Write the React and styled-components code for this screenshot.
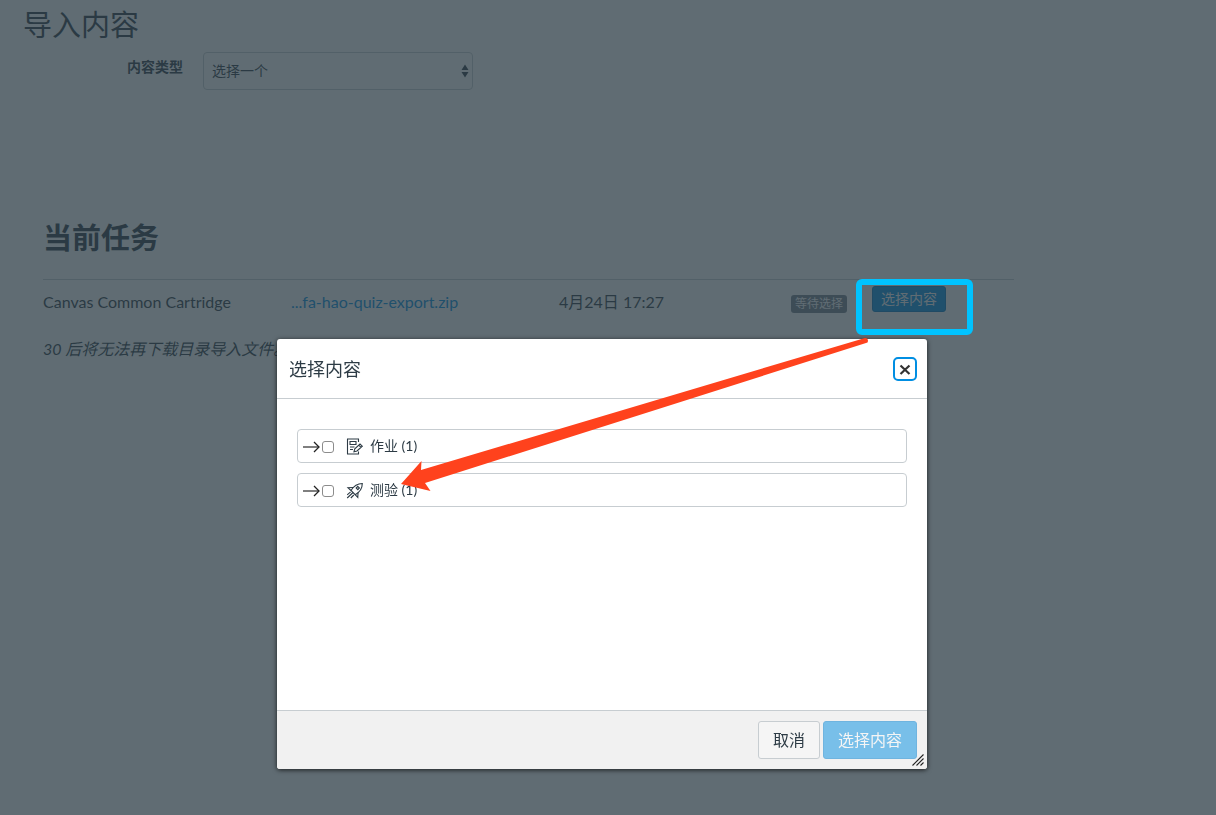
import React from "react";
import styled, { createGlobalStyle } from "styled-components";

const Global = createGlobalStyle`
  *, *::before, *::after { box-sizing: border-box; }
  html, body, #root { height: 100%; }
  body {
    margin: 0;
    background: #fff;
    color: #2d3b45;
    font-family: Lato, "Noto Sans CJK SC", sans-serif;
    font-size: 16px;
    line-height: 24px;
  }
  button, input, select { font: inherit; color: inherit; }
`;

const Page = styled.main`
  min-height: 100%;
  padding: 5px 23px;
`;

const PageTitle = styled.h1`
  margin: 0;
  font-size: 29px;
  line-height: 40px;
  font-weight: 400;
`;

const Field = styled.div`
  display: flex;
  align-items: flex-start;
  gap: 20px;
  padding-top: 7px;
  font-size: 14px;
`;

const FieldLabel = styled.label`
  width: 160px;
  padding-top: 5px;
  line-height: 20px;
  font-weight: 700;
  text-align: right;
`;

const SelectWrap = styled.div`
  display: grid;
  align-items: center;
  width: 270px;
  > * { grid-area: 1 / 1; }
  > svg { justify-self: end; margin-right: 4px; pointer-events: none; }
`;

const Select = styled.select`
  appearance: none;
  width: 100%;
  height: 38px;
  padding: 0 8px;
  border: 1px solid #c7cdd1;
  border-radius: 4px;
  background: #fff;
`;

const Jobs = styled.section`
  max-width: 971px;
  margin: 128px 0 0 20px;
`;

const JobsTitle = styled.h2`
  margin: 0;
  padding-bottom: 21px;
  border-bottom: 1px solid #c7cdd1;
  font-size: 29px;
  line-height: 40px;
  font-weight: 700;
`;

const JobTable = styled.table`
  width: 100%;
  border-collapse: collapse;
  table-layout: fixed;
  td { padding: 6px 0; height: 46px; vertical-align: top; }
`;

const Cell = styled.td`
  width: ${(p) => p.$width}px;
  line-height: ${(p) => p.$line || 32}px;
`;

const FileLink = styled.a`
  color: #008ee2;
  text-decoration: none;
`;

const Badge = styled.span`
  display: inline-block;
  padding: 0 4px;
  border-radius: 3px;
  background: #73818c;
  color: #fff;
  font-size: 12px;
  line-height: 18px;
`;

const SmallButton = styled.button`
  display: block;
  height: 26px;
  padding: 0 8px;
  border: 1px solid #0079c1;
  border-radius: 3px;
  background: #008ee2;
  color: #fff;
  font-size: 14px;
  line-height: 24px;
`;

const Note = styled.p`
  margin: 0;
  padding-top: 11px;
  font-style: italic;
`;

const Overlay = styled.div`
  position: fixed;
  inset: 0;
  background: rgba(43, 59, 68, 0.75);
`;

const Dialog = styled.section`
  position: absolute;
  top: 339px;
  left: calc(50% - 331px);
  display: flex;
  flex-direction: column;
  width: 650px;
  height: 430px;
  border-radius: 3px;
  overflow: hidden;
  background: #fff;
  box-shadow: 0 1px 5px rgba(0, 0, 0, 0.75);
`;

const DialogHeader = styled.header`
  display: flex;
  align-items: center;
  justify-content: space-between;
  height: 60px;
  padding: 0 10px 0 12px;
  border-bottom: 1px solid #c7cdd1;
`;

const DialogTitle = styled.h2`
  margin: 0;
  font-size: 18px;
  font-weight: 400;
`;

const CloseButton = styled.button`
  display: grid;
  place-items: center;
  width: 24px;
  height: 24px;
  padding: 0;
  border: 2px solid #008ee2;
  border-radius: 5px;
  background: #fff;
  color: #333;
`;

const DialogBody = styled.div`
  flex: 1;
  padding: 30px 20px;
`;

const List = styled.ul`
  display: flex;
  flex-direction: column;
  gap: 10px;
  margin: 0;
  padding: 0;
  list-style: none;
`;

const Item = styled.li`
  display: flex;
  align-items: center;
  height: 34px;
  padding-left: 5px;
  border: 1px solid #c7cdd1;
  border-radius: 4px;
  font-size: 14px;
`;

const Expand = styled.button`
  display: flex;
  margin-right: 2px;
  padding: 0;
  border: 0;
  background: none;
`;

const Check = styled.input`
  appearance: none;
  width: 12px;
  height: 12px;
  margin: 1px 0 0;
  border: 1px solid #8c8c8c;
  border-radius: 3px;
  background: #fff;
`;

const ItemLabel = styled.label`
  display: flex;
  align-items: center;
  gap: 6px;
  padding-left: 12px;
`;

const DialogFooter = styled.footer`
  display: flex;
  justify-content: flex-end;
  gap: 3px;
  height: 59px;
  padding: 10px;
  border-top: 1px solid #c7cdd1;
  background: #f1f1f1;
`;

const FooterButton = styled.button`
  height: 38px;
  padding: 0 14px;
  border: 1px solid ${(p) => (p.$primary ? "#6fb4df" : "#c7cdd1")};
  border-radius: 3px;
  background: ${(p) => (p.$primary ? "#78bfe9" : "#f5f5f5")};
  color: ${(p) => (p.$primary ? "#f5f5f5" : "#2d3b45")};
`;

const Grip = styled.svg`
  position: absolute;
  right: 3px;
  bottom: 3px;
`;

const Marks = styled.svg`
  position: absolute;
  top: 275px;
  left: calc(50% - 213px);
  pointer-events: none;
`;

const ArrowRight = () => (
  <svg width="17" height="14" viewBox="0 0 17 14" fill="none" strokeWidth="1.3">
    <path stroke="#555" d="M0 8H15.5" />
    <path stroke="#222" d="M11 3L16 8L11 13" />
  </svg>
);

const AssignmentIcon = () => (
  <svg width="18" height="18" viewBox="0 0 18 18" fill="none" stroke="#2d3b45" strokeWidth="1.1">
    <path d="M12.5 5V2H1.5V17H12.5V14.5" />
    <path d="M4 4.5H10V7.5H4ZM4 10H8.5M4 12.5H7" />
    <path d="M8 14.7L8.8 11.8L14 7L16.3 9.2L11 14ZM12.7 8.2L15 10.4" />
  </svg>
);

const QuizIcon = () => (
  <svg width="18" height="18" viewBox="0 0 18 18" fill="none" stroke="#2d3b45" strokeWidth="1.1">
    <path d="M5 9.5C8 4.6 11.5 2.5 16.3 2.5C16.3 7.3 14 11 9.2 13.7Z" />
    <path d="M7.3 6.5L2 6.8L5 9.5M12 11.5L11.8 16.5L9.2 13.7" />
    <path d="M11.8 5.4L13.4 7L11.8 8.6L10.2 7ZM1.2 17L7 11.5M1.2 13.8L4.6 10.8M4.8 17L7.8 14" />
  </svg>
);

const items = [
  { id: "assignments", label: "作业 (1)", Icon: AssignmentIcon },
  { id: "quizzes", label: "测验 (1)", Icon: QuizIcon },
];

export default function App() {
  return (
    <>
      <Global />
      <Page>
        <PageTitle>导入内容</PageTitle>
        <Field>
          <FieldLabel htmlFor="content-type">内容类型</FieldLabel>
          <SelectWrap>
            <Select id="content-type" defaultValue="none">
              <option value="none">选择一个</option>
            </Select>
            <svg width="8" height="14" viewBox="0 0 8 14" fill="#2d3b45">
              <path d="M4 0.5L7.5 6H0.5ZM4 13.5L7.5 8H0.5Z" />
            </svg>
          </SelectWrap>
        </Field>
        <Jobs>
          <JobsTitle>当前任务</JobsTitle>
          <JobTable>
            <tbody>
              <tr>
                <Cell $width={248}>Canvas Common Cartridge</Cell>
                <Cell $width={268}>
                  <FileLink href="#file">...fa-hao-quiz-export.zip</FileLink>
                </Cell>
                <Cell $width={232}>4月24日 17:27</Cell>
                <Cell $width={81}>
                  <Badge>等待选择</Badge>
                </Cell>
                <Cell $width={142} $line={26}>
                  <SmallButton type="button">选择内容</SmallButton>
                </Cell>
              </tr>
            </tbody>
          </JobTable>
          <Note>30 后将无法再下载目录导入文件。</Note>
        </Jobs>
      </Page>
      <Overlay>
        <Dialog role="dialog" aria-labelledby="dialog-title">
          <DialogHeader>
            <DialogTitle id="dialog-title">选择内容</DialogTitle>
            <CloseButton type="button" aria-label="关闭">
              <svg width="12" height="12" viewBox="0 0 12 12" stroke="currentColor" strokeWidth="2.2">
                <path d="M1.5 2.5L10.5 11M10.5 2.5L1.5 11" />
              </svg>
            </CloseButton>
          </DialogHeader>
          <DialogBody>
            <List>
              {items.map(({ id, label, Icon }) => (
                <Item key={id}>
                  <Expand type="button" aria-label="展开">
                    <ArrowRight />
                  </Expand>
                  <Check type="checkbox" id={id} />
                  <ItemLabel htmlFor={id}>
                    <Icon />
                    {label}
                  </ItemLabel>
                </Item>
              ))}
            </List>
          </DialogBody>
          <DialogFooter>
            <FooterButton type="button">取消</FooterButton>
            <FooterButton type="button" $primary>选择内容</FooterButton>
          </DialogFooter>
          <Grip width="12" height="12" viewBox="0 0 12 12" stroke="#222" strokeWidth="1.1">
            <path d="M0.5 11.5L11.5 0.5M4.5 11.5L11.5 4.5M8.5 11.5L11.5 8.5" />
          </Grip>
        </Dialog>
        <Marks width="580" height="220" viewBox="395 275 580 220" fill="none">
          <rect x="859" y="282" width="111" height="50" rx="3" stroke="#00c3ff" strokeWidth="6" />
          <path
            fill="#ff421d"
            d="M401 484L421.5 461L421 470L865 338Q868 338 868 341Q868 343 866 343L425 483L430.5 491Z"
          />
        </Marks>
      </Overlay>
    </>
  );
}
